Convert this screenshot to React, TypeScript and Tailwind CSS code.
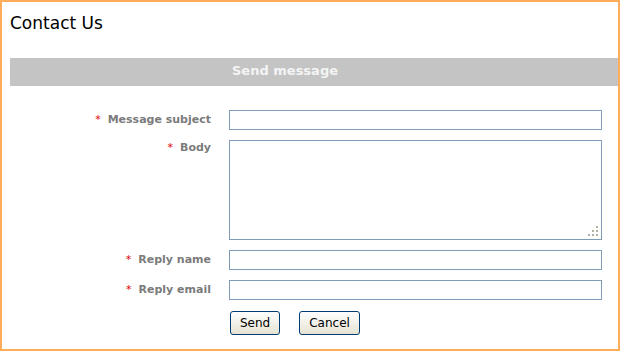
import React from "react";

const font = { fontFamily: '"DejaVu Sans", Verdana, sans-serif' };

function Label({ text }: { text: string }) {
  return (
    <div className="w-[201px] shrink-0 text-right text-[11px] font-bold leading-[16px] text-[#7b7b7b]">
      <span className="mr-[7px] font-normal text-[#e00000]">*</span>
      {text}
    </div>
  );
}

export default function App() {
  return (
    <div
      className="box-border h-[351px] w-[620px] border-2 border-[#ffad5b] bg-white pl-[8px]"
      style={font}
    >
      <h1 className="mt-[11px] text-[17px] leading-[20px] font-normal text-black">Contact Us</h1>
      <div className="mt-[25px] h-[28px] bg-[#c4c4c4] pl-[222px] pt-[5px] text-[13px] font-bold leading-[15px] text-[#f4f4f4]">
        Send message
      </div>
      <form className="mt-[24px] flex flex-col gap-[10px]">
        <div className="flex items-center gap-[18px]">
          <Label text="Message subject" />
          <input className="box-border h-[20px] w-[373px] border border-[#7f9db9] bg-white outline-none" />
        </div>
        <div className="flex items-start gap-[18px]">
          <Label text="Body" />
          <div className="relative h-[100px] w-[373px]">
            <textarea className="box-border block h-[100px] w-[373px] resize-none border border-[#7f9db9] bg-white outline-none" />
            <svg className="absolute right-[4px] bottom-[4px]" width="10" height="10" viewBox="0 0 10 10">
              <g fill="#b2b09f">
                <rect x="8" y="0" width="2" height="2" />
                <rect x="4" y="4" width="2" height="2" />
                <rect x="8" y="4" width="2" height="2" />
                <rect x="0" y="8" width="2" height="2" />
                <rect x="4" y="8" width="2" height="2" />
                <rect x="8" y="8" width="2" height="2" />
              </g>
            </svg>
          </div>
        </div>
        <div className="flex items-center gap-[18px]">
          <Label text="Reply name" />
          <input className="box-border h-[20px] w-[373px] border border-[#7f9db9] bg-white outline-none" />
        </div>
        <div className="flex items-center gap-[18px]">
          <Label text="Reply email" />
          <input className="box-border h-[20px] w-[373px] border border-[#7f9db9] bg-white outline-none" />
        </div>
        <div className="mt-[1px] flex gap-[19px] pl-[220px]">
          <button
            type="button"
            className="box-border h-[24px] rounded-[3px] border border-[#003c74] bg-linear-to-b from-white to-[#e6e3d3] px-[9px] text-[12px] leading-[20px] text-black"
          >
            Send
          </button>
          <button
            type="button"
            className="box-border h-[24px] rounded-[3px] border border-[#003c74] bg-linear-to-b from-white to-[#e6e3d3] px-[9px] text-[12px] leading-[20px] text-black"
          >
            Cancel
          </button>
        </div>
      </form>
    </div>
  );
}
